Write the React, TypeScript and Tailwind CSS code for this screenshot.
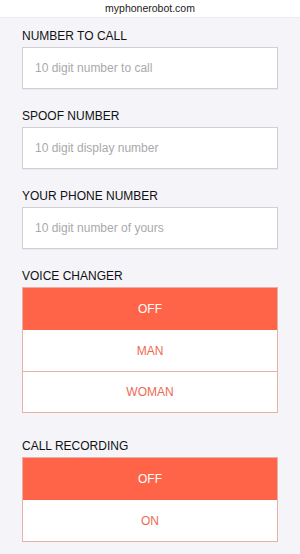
import React from "react";

const font = { fontFamily: '"Liberation Sans", Arial, sans-serif' };

function Field({ label, placeholder }: { label: string; placeholder: string }) {
  return (
    <div className="flex flex-col">
      <div className="text-[12px] leading-[14px] text-[#111]">{label}</div>
      <div className="mt-[4px] h-[42px] bg-white border border-[#cfcfd4] flex items-center pl-[12px] text-[12px] text-[#a9a9ad] shadow-[0_1px_1px_rgba(0,0,0,0.04)]">
        {placeholder}
      </div>
    </div>
  );
}

function Options({ label, items }: { label: string; items: string[] }) {
  return (
    <div className="flex flex-col">
      <div className="text-[12px] leading-[14px] text-[#111]">{label}</div>
      <div className="mt-[4px] flex flex-col border border-[#e6b1a7]">
        {items.map((it, i) =>
          i === 0 ? (
            <div key={it} className="h-[42px] bg-[#ff6348] flex items-center justify-center text-[12px] text-white">
              {it}
            </div>
          ) : (
            <div
              key={it}
              className={
                "h-[41px] bg-white flex items-center justify-center text-[12px] text-[#ec6a52] " +
                (i > 1 ? "border-t border-[#e6b1a7]" : "")
              }
            >
              {it}
            </div>
          )
        )}
      </div>
    </div>
  );
}

export default function App() {
  return (
    <div className="w-[300px] h-[554px] bg-[#f4f4f9] overflow-hidden flex flex-col" style={font}>
      <div className="h-[18px] bg-white flex items-center justify-center text-[10.5px] text-[#222] border-b border-[#ececf0]">
        myphonerobot.com
      </div>
      <div className="px-[22px] pt-[11px] flex flex-col gap-[20px]">
        <Field label="NUMBER TO CALL" placeholder="10 digit number to call" />
        <Field label="SPOOF NUMBER" placeholder="10 digit display number" />
        <Field label="YOUR PHONE NUMBER" placeholder="10 digit number of yours" />
        <Options label="VOICE CHANGER" items={["OFF", "MAN", "WOMAN"]} />
        <div className="mt-[6px]">
          <Options label="CALL RECORDING" items={["OFF", "ON"]} />
        </div>
      </div>
    </div>
  );
}
